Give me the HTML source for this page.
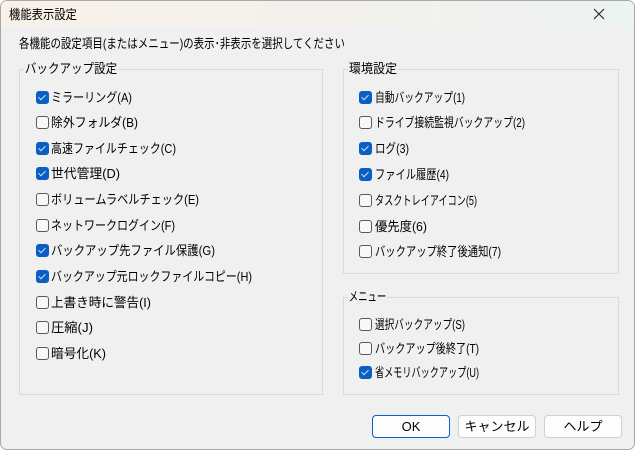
<!DOCTYPE html>
<html><head><meta charset="utf-8"><style>
*{margin:0;padding:0;box-sizing:border-box}
body{width:636px;height:450px;background:#fff;position:relative;overflow:hidden;font-family:"Liberation Sans","Noto Sans CJK JP",sans-serif;font-size:13px;color:#000}
.win{position:absolute;left:0;top:0;width:635px;height:450px;background:#f0f0f0;border:1px solid #a8a8a8;border-radius:7px;overflow:hidden}
.title{position:absolute;left:0;top:0;width:100%;height:26px;background:linear-gradient(90deg,#f8f1ea,#f3f1ec 60%,#ecf3f3)}
.t{position:absolute;white-space:nowrap;line-height:16px;transform-origin:0 50%}
.grp{position:absolute;border:1px solid #d9d9d9}
.cb{position:absolute;width:13px;height:13px;border:1px solid #5a5a5a;border-radius:3px;background:#f8f8f8}
.cb.on{background:#0a5fc4;border-color:#0a5fc4}
.cb.on::after{content:"";position:absolute;left:3px;top:1px;width:3px;height:6px;border:solid #cfe0f5;border-width:0 1.3px 1.3px 0;transform:rotate(45deg)}
.btn{position:absolute;top:414px;width:78px;height:23px;border:1px solid #cfcfcf;border-radius:4px;background:#fdfdfd;text-align:center;line-height:21px}
.btn.ok{border:1px solid #0a5fc4}
.lbl{background:#f0f0f0;padding:0 1px}
</style></head><body>
<div class="win">
<div class="title"></div>
<div class="t" data-w="68" style="left:8px;top:6px">機能表示設定</div>
<svg style="position:absolute;left:592px;top:7px" width="12" height="12"><path d="M1 1L11 11M11 1L1 11" stroke="#222" stroke-width="1.1"/></svg>
<div class="t" data-w="326" style="left:18px;top:35px">各機能の設定項目(またはメニュー)の表示･非表示を選択してください</div>

<div class="grp" style="left:18px;top:68px;width:304px;height:326px"></div>
<div class="t lbl" data-w="94" style="left:23px;top:60px">バックアップ設定</div>
<div class="grp" style="left:342px;top:68px;width:276px;height:205px"></div>
<div class="t lbl" data-w="50" style="left:347px;top:60px">環境設定</div>
<div class="grp" style="left:342px;top:296px;width:276px;height:98px"></div>
<div class="t lbl" data-w="39" style="left:347px;top:288px">メニュー</div>

<div id="items"></div>

<div class="btn ok" style="left:371px">OK</div>
<div class="btn" style="left:457px">キャンセル</div>
<div class="btn" style="left:543px">ヘルプ</div>
</div>
<script>
var L=[["ミラーリング(A)",131,1],["除外フォルダ(B)",137,0],["高速ファイルチェック(C)",175,1],["世代管理(D)",119,1],["ボリュームラベルチェック(E)",198,0],["ネットワークログイン(F)",174,0],["バックアップ先ファイル保護(G)",214,1],["バックアップ元ロックファイルコピー(H)",251,1],["上書き時に警告(I)",150,0],["圧縮(J)",92,0],["暗号化(K)",105,0]];
var R=[["自動バックアップ(1)",464,1],["ドライブ接続監視バックアップ(2)",524,0],["ログ(3)",408,1],["ファイル履歴(4)",448,1],["タスクトレイアイコン(5)",476,0],["優先度(6)",426,0],["バックアップ終了後通知(7)",500,0]];
var M=[["選択バックアップ(S)",464,0],["バックアップ後終了(T)",478,0],["省メモリバックアップ(U)",478,1]];
var h="";
function add(arr,bx,tx,y0,p){arr.forEach(function(a,i){var y=Math.round(y0+i*p);h+='<div class="cb'+(a[2]?' on':'')+'" style="left:'+bx+'px;top:'+(y-7)+'px"></div><div class="t" data-w="'+(a[1]-tx)+'" style="left:'+tx+'px;top:'+(y-8)+'px">'+a[0]+'</div>';});}
add(L,35,50,96.5,25.65);add(R,358,374,96.5,25.8);add(M,358,374,324,24);
document.getElementById('items').innerHTML=h;
document.querySelectorAll('.t[data-w]').forEach(function(e){var w=e.getBoundingClientRect().width;var t=+e.dataset.w;if(w>0)e.style.transform='scaleX('+(t/w)+')';});
</script>
</body></html>
